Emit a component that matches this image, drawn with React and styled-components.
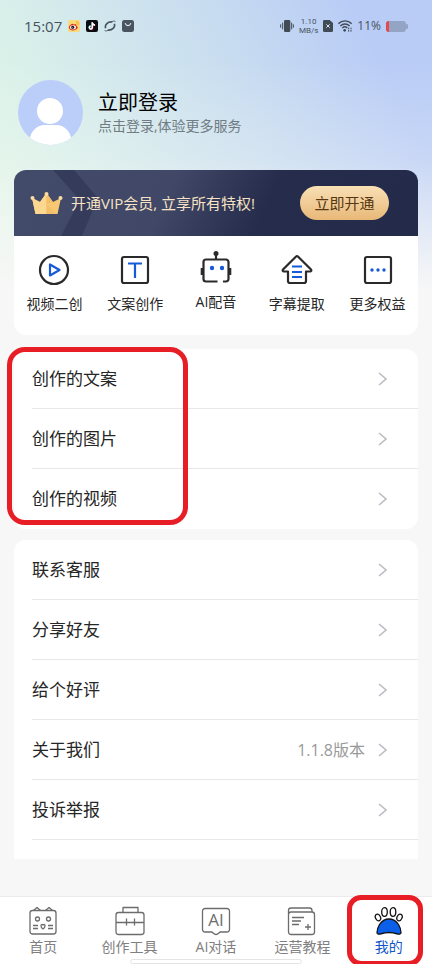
import styled, { createGlobalStyle } from "styled-components";

const GlobalStyle = createGlobalStyle`
  * { box-sizing: border-box; }

  body {
    margin: 0;
    background: #f7f7f7;
    font-family: "Open Sans", "Noto Sans CJK SC", sans-serif;
    color: #262626;
  }

  button {
    margin: 0;
    padding: 0;
    border: 0;
    background: none;
    font: inherit;
    color: inherit;
    cursor: pointer;
  }

  a { color: inherit; text-decoration: none; }
  svg { display: block; flex: none; }
`;

const Page = styled.div`
  display: flex;
  flex-direction: column;
  min-height: 100vh;
  background:
    linear-gradient(180deg, rgba(247,247,247,0) 60px, rgba(247,247,247,.25) 160px, #f7f7f7 290px),
    linear-gradient(64deg, #e2f8e4 0, #d9f0ea 24%, #c8dcf0 60%, #b9ccf6 86%, #b8ccf6 100%) 0 0 / 100% 300px no-repeat,
    #f7f7f7;
`;

const StatusBar = styled.header`
  display: flex;
  align-items: center;
  justify-content: space-between;
  height: 52px;
  padding: 0 24px;
  color: #47535e;
`;

const StatusGroup = styled.div`
  display: flex;
  align-items: center;
  gap: ${(p) => p.$gap}px;
`;

const Clock = styled.time`
  font-size: 15px;
  line-height: 20px;
  font-weight: 500;
`;

const Speed = styled.span`
  display: grid;
  font-family: Roboto, sans-serif;
  font-size: 8px;
  line-height: 9px;
  text-align: center;
`;

const Percent = styled.span`
  font-size: 12px;
  line-height: 20px;
  font-weight: 500;
`;

const Profile = styled.button`
  display: flex;
  align-items: center;
  gap: 15px;
  margin: 28px 18px 25px;
  text-align: left;
`;

const ProfileText = styled.span`
  display: grid;
`;

const Name = styled.span`
  font-size: 20px;
  line-height: 26px;
  color: #000;
`;

const Hint = styled.span`
  font-size: 14px;
  line-height: 20px;
  color: #707b82;
`;

const Content = styled.main`
  display: flex;
  flex-direction: column;
  padding: 0 14px 37px;
`;

const Vip = styled.section`
  position: relative;
  display: flex;
  align-items: center;
  justify-content: space-between;
  height: 66px;
  padding: 0 29px 0 16px;
  border-radius: 12px 12px 0 0;
  background: linear-gradient(115deg, #434b6b 0, #404767 38%, #262c4b 62%, #242a49 100%);
  overflow: hidden;
`;

const VipArrow = styled.svg`
  position: absolute;
  left: 38px;
  top: 0;
`;

const VipLabel = styled.div`
  position: relative;
  display: flex;
  align-items: center;
  gap: 8px;
  font-size: 15px;
  line-height: 20px;
  color: #f8e3c4;
  white-space: nowrap;
`;

const VipButton = styled.button`
  width: 89px;
  height: 34px;
  border-radius: 17px;
  background: linear-gradient(180deg, #f9e0b5, #e8b878);
  color: #573713;
  font-size: 15px;
  line-height: 20px;
`;

const Tools = styled.nav`
  display: grid;
  grid-template-columns: repeat(5, 1fr);
  height: 99px;
  padding-top: 14px;
  border-radius: 0 0 12px 12px;
  background: #fff;
`;

const Tool = styled.button`
  display: flex;
  flex-direction: column;
  align-items: center;
  justify-content: flex-start;
  gap: 4px;
  font-size: 14px;
  line-height: 20px;
  white-space: nowrap;
`;

const Card = styled.div`
  position: relative;
  margin-top: ${(p) => (p.$cut ? 11 : 14)}px;
  padding-bottom: ${(p) => (p.$cut ? 19 : 0)}px;
  border-radius: ${(p) => (p.$cut ? "12px 12px 0 0" : "12px")};
  background: #fff;
`;

const Row = styled.a`
  display: flex;
  align-items: center;
  height: 60px;
  margin-left: 18px;
  padding: 1px 31px 0 0;
  border-bottom: 1px solid ${(p) => (p.$last ? "transparent" : "#e8e8e8")};
  font-size: 17px;
  line-height: 24px;
`;

const RowValue = styled.span`
  margin-left: auto;
  margin-right: 13px;
  font-size: 16px;
  color: #999;
`;

const Chevron = styled.svg`
  margin-left: ${(p) => (p.$push ? "auto" : 0)};
`;

const Mark = styled.div`
  position: absolute;
  border: 5px solid #e81e26;
  pointer-events: none;
`;

const ListMark = styled(Mark)`
  left: -7px;
  top: -2px;
  bottom: 4px;
  width: 181px;
  border-radius: 18px;
`;

const TabMark = styled(Mark)`
  inset: -2px 9px -2px 1px;
  border-radius: 14px;
`;

const TabBar = styled.nav`
  position: relative;
  display: grid;
  grid-template-columns: repeat(5, 1fr);
  height: 68px;
  margin-top: auto;
  border-top: 1px solid #ebebeb;
  background: #fff;
`;

const Tab = styled.a`
  position: relative;
  display: flex;
  flex-direction: column;
  align-items: center;
  gap: 1px;
  padding-top: 9px;
  font-size: 14px;
  line-height: 20px;
  color: ${(p) => (p.$active ? "#0f55c8" : "#808080")};
  white-space: nowrap;
`;

const HomeBar = styled.div`
  position: absolute;
  left: 30%;
  right: 30%;
  bottom: 0;
  height: 5px;
  border: 1px solid #e4e4e4;
  border-radius: 3px;
  background: #fff;
`;

/* status bar icons */

function WeiboIcon() {
  return (
    <svg width="12" height="12" viewBox="0 0 36 36">
      <rect width="36" height="36" rx="6" fill="#fbd978" />
      <path d="M15 11c-7 1-13 7-12 13 1 5 8 8 15 7s12-6 11-10c-1-3-4-3-4-3s1-4-2-5-5 1-6 1 0-3-2-3z" fill="#d2281e" />
      <ellipse cx="15" cy="22" rx="9" ry="6.500" fill="#fff" />
      <circle cx="14" cy="22" r="4.800" fill="#181010" />
      <circle cx="12.500" cy="23" r="1.600" fill="#fff" />
      <path d="M24 5c5-1 9 3 8 9M25 10c2 0 4 2 3 4" fill="none" stroke="#f09a25" strokeWidth="2.500" />
    </svg>
  );
}

function TiktokIcon() {
  return (
    <svg width="12" height="12" viewBox="0 0 36 36">
      <rect width="36" height="36" rx="6" fill="#0b0b10" />
      <g fill="none" strokeWidth="4">
        <path d="M18 7v16a4.500 4.500 0 1 1-5-5M18 8c1 5 4 7 8 7" stroke="#35dfe0" />
        <path d="M20 8v16a4.500 4.500 0 1 1-5-5M20 9c1 5 4 7 8 7" stroke="#f0385c" />
        <path d="M19 7v16a4.500 4.500 0 1 1-5-5M19 8c1 5 4 7 8 7" stroke="#fff" />
      </g>
    </svg>
  );
}

function PlanetIcon() {
  return (
    <svg width="12" height="12" viewBox="0 0 36 36" fill="none" stroke="#47535e">
      <path d="M5 25C1 14 12 4 25 6" strokeWidth="5" />
      <path d="M31 11c4 11-7 21-20 19" strokeWidth="5" />
      <path d="M24 5c5-3 9-3 10 1M12 31c-5 3-9 3-10-1" strokeWidth="2.500" />
    </svg>
  );
}

function BagIcon() {
  return (
    <svg width="12" height="12" viewBox="0 0 36 36">
      <rect width="36" height="36" rx="7" fill="#4a545e" />
      <path d="M10 11c3 8 13 8 16 0" fill="none" stroke="#e4ecf4" strokeWidth="3.500" strokeLinecap="round" />
    </svg>
  );
}

function VibrateIcon() {
  return (
    <svg width="14" height="12" viewBox="0 0 42 36">
      <rect x="12" y="0" width="19" height="36" rx="4" fill="#404b56" />
      <path d="M8 8v20M35 8v20M2 13v10M40 13v10" stroke="#404b56" strokeWidth="3" />
    </svg>
  );
}

function SimIcon() {
  return (
    <svg width="10" height="12" viewBox="0 0 30 36">
      <path d="M4 0h16l10 9v23a4 4 0 0 1-4 4H4a4 4 0 0 1-4-4V4a4 4 0 0 1 4-4z" fill="#404b56" />
      <path d="M10 13l10 10M20 13L10 23" stroke="#d6e2f6" strokeWidth="3" />
    </svg>
  );
}

function WifiIcon() {
  return (
    <svg width="14" height="12" viewBox="0 0 42 36" fill="none" stroke="#404b56" strokeWidth="4">
      <path d="M1 11C12 0 30 0 41 11M7 18c8-8 20-8 28 0M13 24c5-5 10-5 15 0" />
      <circle cx="20" cy="31" r="4" fill="#404b56" stroke="none" />
      <path d="M32 23v5M39 23v5M32 30v5M39 30v5" strokeWidth="3" />
    </svg>
  );
}

function BatteryIcon() {
  return (
    <svg width="22" height="11" viewBox="0 0 22 11">
      <rect width="20" height="11" rx="3" fill="#93a4c4" />
      <path d="M3 0v11a3 3 0 0 1-3-3V3a3 3 0 0 1 3-3z" fill="#e5484d" />
      <rect x="20" y="3" width="2" height="5" rx="1" fill="#93a4c4" />
    </svg>
  );
}

function Avatar() {
  return (
    <svg width="65" height="65" viewBox="0 0 65 65">
      <clipPath id="face">
        <circle cx="32.500" cy="32.500" r="32.500" />
      </clipPath>
      <g clipPath="url(#face)">
        <rect width="65" height="65" fill="#bbcef9" />
        <circle cx="32" cy="31" r="13" fill="#fff" />
        <path d="M11 65C11 52 18 45 27 45h11c9 0 16 7 16 20z" fill="#fff" />
      </g>
    </svg>
  );
}

function Crown() {
  return (
    <svg width="33" height="24" viewBox="0 0 33 24">
      <path d="M2 7l8 4 6.500-9L23 11l8-4-3.500 16h-22z" fill="#f8c873" />
      <path d="M16.500 2v21h-11L2 7l8 4z" fill="#fbd790" />
      <path d="M16.500 13l10 10h-10zM16.500 2L23 11l-6.500 2z" fill="#f3bf6a" />
      <circle cx="16.500" cy="3" r="2" fill="#fbdda2" />
      <circle cx="2.500" cy="7" r="2" fill="#fbdda2" />
      <circle cx="30.500" cy="7" r="2" fill="#fbdda2" />
    </svg>
  );
}

/* shortcut icons: dark frame with a blue detail inside */

const INK = "#2a2a2c";
const BLUE = "#175ad8";

function ToolIcon({ height = 40, children }) {
  return (
    <svg
      width="32"
      height={height}
      viewBox={`0 0 32 ${height}`}
      fill="none"
      stroke={INK}
      strokeWidth="2.200"
      strokeLinejoin="round"
    >
      {children}
    </svg>
  );
}

const tools = [
  {
    label: "视频二创",
    icon: (
      <ToolIcon>
        <circle cx="16" cy="20" r="14" />
        <path d="M12 14.500v11l9.500-5.500z" stroke={BLUE} />
      </ToolIcon>
    ),
  },
  {
    label: "文案创作",
    icon: (
      <ToolIcon>
        <rect x="3" y="7" width="26" height="26" rx="2" />
        <path d="M9 13.500h14M16 13.500V28" stroke={BLUE} />
      </ToolIcon>
    ),
  },
  {
    label: "AI配音",
    icon: (
      <ToolIcon height={38}>
        <circle cx="16" cy="3.500" r="2.500" fill={INK} stroke="none" />
        <path d="M16 4v5M17.500 31.500H6A2.500 2.500 0 0 1 3.500 29V12A2.500 2.500 0 0 1 6 9.500h20a2.500 2.500 0 0 1 2.500 2.500v17a2.500 2.500 0 0 1-2.500 2.500h-3" />
        <path d="M2 18v7M30 18v7" strokeWidth="2.600" />
        <circle cx="12" cy="18" r="2.200" fill={BLUE} stroke="none" />
        <circle cx="22" cy="18" r="2.200" fill={BLUE} stroke="none" />
      </ToolIcon>
    ),
  },
  {
    label: "字幕提取",
    icon: (
      <ToolIcon>
        <path d="M14.800 6.700a1.800 1.800 0 0 1 2.400 0L30 19.500c.8 1 .3 2-1 2h-4V31a2 2 0 0 1-2 2H9a2 2 0 0 1-2-2v-9.500H3c-1.300 0-1.800-1-1-2z" />
        <path d="M11 16.500h10M11 22h10M11 27h10" stroke={BLUE} />
      </ToolIcon>
    ),
  },
  {
    label: "更多权益",
    icon: (
      <ToolIcon>
        <rect x="3" y="7" width="26" height="26" rx="2" />
        <g fill={BLUE} stroke="none">
          <circle cx="10" cy="20" r="1.700" />
          <circle cx="16" cy="20" r="1.700" />
          <circle cx="22" cy="20" r="1.700" />
        </g>
      </ToolIcon>
    ),
  },
];

function TabIcon({ children }) {
  return (
    <svg width="30" height="30" viewBox="0 0 30 30" fill="none" stroke="#6c6c6c" strokeWidth="1.300" strokeLinejoin="round">
      {children}
    </svg>
  );
}

const AiText = styled.text`
  font-size: 17px;
  fill: #6c6c6c;
  stroke: none;
`;

const tabs = [
  {
    label: "首页",
    icon: (
      <TabIcon>
        <rect x="2" y="4.500" width="26" height="23.500" rx="2.500" />
        <path d="M5.500 4.500L9 1.500l3.500 3M17.500 4.500l3.500-3 3.500 3" />
        <circle cx="9.500" cy="13" r="2" />
        <circle cx="20.500" cy="13" r="2" />
        <path d="M5 19.500h5M5 22.500h5M20 19.500h5M20 22.500h5M13 19.500c0-1 1-1.500 2-.5 1-1 2-.5 2 .5 0 2-1 3-2 3.500-1-.5-2-1.500-2-3.500z" />
      </TabIcon>
    ),
  },
  {
    label: "创作工具",
    icon: (
      <TabIcon>
        <rect x="1" y="6.500" width="28" height="22" rx="2.500" />
        <path d="M8 6.500v-5h15v5M1 16.500h10M11.500 12.500v7M19.500 12.500v7M12 16.500h7M20 16.500h9" />
      </TabIcon>
    ),
  },
  {
    label: "AI对话",
    icon: (
      <TabIcon>
        <path d="M4 2.500h22a2.500 2.500 0 0 1 2.500 2.500v18.500a2.500 2.500 0 0 1-2.500 2.500h-6.500c-1.500 0-2 2.500-4.500 2.500S12 26 10.500 26H4a2.500 2.500 0 0 1-2.500-2.500V5A2.500 2.500 0 0 1 4 2.500z" />
        <AiText x="15" y="20" textAnchor="middle">AI</AiText>
      </TabIcon>
    ),
  },
  {
    label: "运营教程",
    icon: (
      <TabIcon>
        <rect x="1.500" y="6" width="26" height="22.500" rx="2.500" />
        <path d="M1.500 8V4.500A2.500 2.500 0 0 1 4 2h18.500A2.500 2.500 0 0 1 25 4.500V6M5 11.500h12M5 15h9M5 18.500h7M21 18v6M18 21h6" />
      </TabIcon>
    ),
  },
  {
    label: "我的",
    active: true,
    icon: (
      <TabIcon>
        <g stroke="#111" strokeWidth="1.300">
          <ellipse cx="4" cy="11.500" rx="2.500" ry="3.400" transform="rotate(-25 4 11.500)" />
          <ellipse cx="10.500" cy="6" rx="2.800" ry="4.300" />
          <ellipse cx="19" cy="6" rx="2.800" ry="4.300" />
          <ellipse cx="25.500" cy="11.500" rx="2.500" ry="3.400" transform="rotate(25 25.500 11.500)" />
          <path d="M15 13c-4 0-7.500 2.500-9.500 5.500-1.500 2.500-2.500 5-2.500 8 0 1.500 1.500 2 3 1.500 3-.8 6-1.500 9-1.500s6 .7 9 1.500c1.500.5 3 0 3-1.500 0-3-1-5.500-2.500-8-2-3-5.500-5.500-9.500-5.500z" fill="#0b5fe8" />
        </g>
      </TabIcon>
    ),
  },
];

const works = ["创作的文案", "创作的图片", "创作的视频"];

const settings = [
  { label: "联系客服" },
  { label: "分享好友" },
  { label: "给个好评" },
  { label: "关于我们", value: "1.1.8版本" },
  { label: "投诉举报" },
];

function ListRow({ label, value, last }) {
  return (
    <Row href="#" $last={last}>
      {label}
      {value && <RowValue>{value}</RowValue>}
      <Chevron $push={!value} width="9" height="14" viewBox="0 0 9 14" fill="none" stroke="#b8bcc2" strokeWidth="1.500">
        <path d="M1 1l7 6-7 6" />
      </Chevron>
    </Row>
  );
}

export default function App() {
  return (
    <>
      <GlobalStyle />
      <Page>
        <StatusBar>
          <StatusGroup $gap={6}>
            <Clock>15:07</Clock>
            <WeiboIcon />
            <TiktokIcon />
            <PlanetIcon />
            <BagIcon />
          </StatusGroup>
          <StatusGroup $gap={5}>
            <VibrateIcon />
            <Speed>
              <span>1.10</span>
              <span>MB/s</span>
            </Speed>
            <SimIcon />
            <WifiIcon />
            <Percent>11%</Percent>
            <BatteryIcon />
          </StatusGroup>
        </StatusBar>

        <Profile>
          <Avatar />
          <ProfileText>
            <Name>立即登录</Name>
            <Hint>点击登录,体验更多服务</Hint>
          </ProfileText>
        </Profile>

        <Content>
          <Vip>
            <VipArrow width="60" height="66" viewBox="0 0 60 66">
              <path d="M1 0h21l24 28-16 38H9l19-36z" fill="#343b5b" />
            </VipArrow>
            <VipLabel>
              <Crown />
              开通VIP会员, 立享所有特权!
            </VipLabel>
            <VipButton>立即开通</VipButton>
          </Vip>

          <Tools>
            {tools.map((t) => (
              <Tool key={t.label}>
                {t.icon}
                {t.label}
              </Tool>
            ))}
          </Tools>

          <Card>
            {works.map((label, i) => (
              <ListRow key={label} label={label} last={i === works.length - 1} />
            ))}
            <ListMark />
          </Card>

          <Card $cut>
            {settings.map((s) => (
              <ListRow key={s.label} label={s.label} value={s.value} />
            ))}
          </Card>
        </Content>

        <TabBar>
          {tabs.map((t) => (
            <Tab key={t.label} href="#" $active={t.active}>
              {t.icon}
              {t.label}
              {t.active && <TabMark />}
            </Tab>
          ))}
          <HomeBar />
        </TabBar>
      </Page>
    </>
  );
}
